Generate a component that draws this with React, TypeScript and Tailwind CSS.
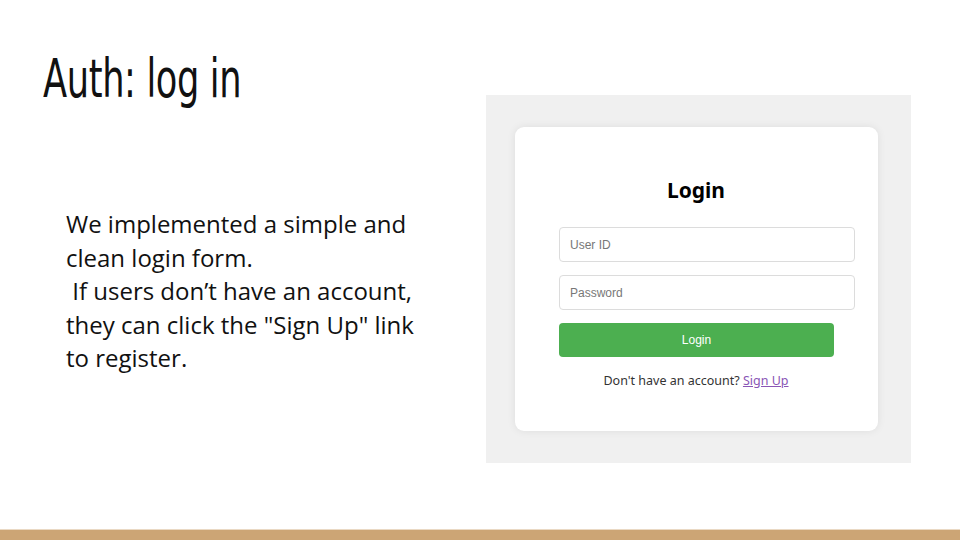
export default function App() {
  return (
    <div className="w-[960px] h-[540px] bg-white flex flex-col overflow-hidden">
      <div className="flex-1 flex">
        {/* left column */}
        <div className="w-[486px] flex flex-col">
          <div className="pl-[43px] pt-[44px] h-[114px]">
            <h1
              className="inline-block text-[54px] leading-[70px] text-[#111] tracking-[-0.5px] scale-x-[0.725] origin-left"
              style={{ fontFamily: '"DejaVu Sans Condensed", "Liberation Sans Narrow", sans-serif', fontWeight: 200 }}
            >
              Auth: log in
            </h1>
          </div>
          <p
            className="pl-[66px] pt-[93px] text-[24px] leading-[33.5px] text-[#111]"
            style={{ fontFamily: '"Open Sans", sans-serif' }}
          >
            We implemented a simple and
            <br />
            clean login form.
            <br />
            &nbsp;If users don’t have an account,
            <br />
            they can click the "Sign Up" link
            <br />
            to register.
          </p>
        </div>

        {/* screenshot panel */}
        <div className="pt-[95px]">
          <div className="w-[425px] h-[368px] bg-[#f0f0f0] pt-[32px] pl-[29px]">
            <div
              className="w-[363px] h-[304px] bg-white rounded-[9px] shadow-[0_0_8px_rgba(0,0,0,0.08)] flex flex-col pl-[44px] pr-[23px] pt-[48px]"
              style={{ fontFamily: '"Liberation Sans", Arial, sans-serif' }}
            >
              <h2
                className="text-center text-[21px] font-bold text-black leading-[30px] pr-[22px]"
                style={{ fontFamily: '"Noto Sans", sans-serif' }}
              >
                Login
              </h2>
              <div className="mt-[22px] h-[35px] border border-[#dcdcdc] rounded-[4px] flex items-center px-[10px] text-[12px] text-[#777]">
                User ID
              </div>
              <div className="mt-[13px] h-[35px] border border-[#dcdcdc] rounded-[4px] flex items-center px-[10px] text-[12px] text-[#777]">
                Password
              </div>
              <div className="mt-[13px] w-[275px] h-[34px] bg-[#4caf50] rounded-[4px] flex items-center justify-center text-[12px] text-white">
                Login
              </div>
              <div
                className="mt-[15px] text-center text-[12.5px] text-[#333] pr-[22px]"
                style={{ fontFamily: '"Noto Sans", sans-serif' }}
              >
                Don't have an account?{" "}
                <span className="text-[#8a55b5] underline">Sign Up</span>
              </div>
            </div>
          </div>
        </div>
      </div>
      <div className="h-px bg-[#ead9c4]" />
      <div className="h-[10px] bg-[#cca575]" />
    </div>
  );
}
